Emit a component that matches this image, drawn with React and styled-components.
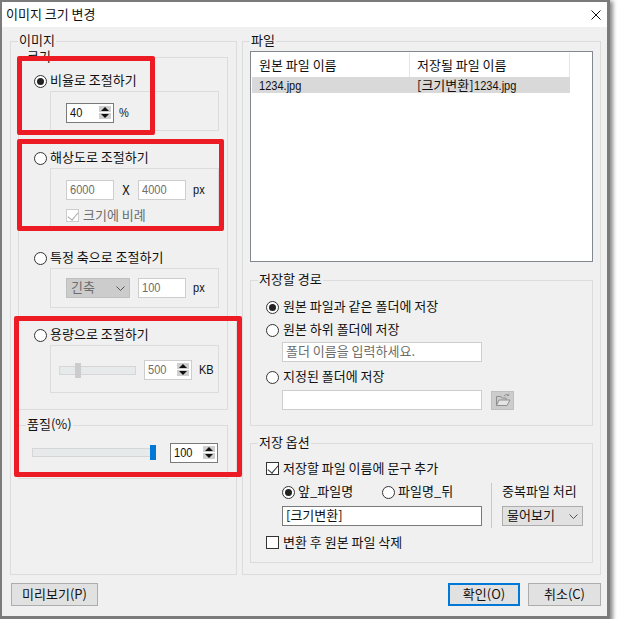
import styled, { createGlobalStyle } from "styled-components";

const GlobalStyle = createGlobalStyle`
  html, body {
    margin: 0;
    background: #fff;
  }
  * {
    box-sizing: border-box;
  }
`;

const App = () => {
  return (
    <>
      <GlobalStyle />
      <Dialog>
        <TitleBar>
          <Title>이미지 크기 변경</Title>
          <CloseIcon width="10" height="10" viewBox="0 0 10 10">
            <path d="M0.5 0.5 L9.5 9.5 M9.5 0.5 L0.5 9.5" stroke="#111" fill="none" />
          </CloseIcon>
        </TitleBar>

        <Body>
          <Columns>
            <LeftGroup>
              <Legend>이미지</Legend>
              <SizeGroup>
                <Legend>크기</Legend>
                <Option $top={14}>
                  <RadioLabel>
                    <Radio $checked />
                    비율로 조절하기
                  </RadioLabel>
                  <SubBox $height={40} $pad={11}>
                    <Spin $width={48} value="40" active />
                    <Unit $gap={5}>%</Unit>
                  </SubBox>
                </Option>
                <Option $top={18}>
                  <RadioLabel>
                    <Radio />
                    해상도로 조절하기
                  </RadioLabel>
                  <SubBox $height={62} $pad={11}>
                    <Fill $width={48} $disabled><Latin>6000</Latin></Fill>
                    <Times>X</Times>
                    <Fill $width={48} $disabled><Latin>4000</Latin></Fill>
                    <Unit $gap={7}>px</Unit>
                    <Ratio>
                      <CheckBox $checked $disabled />
                      크기에 비례
                    </Ratio>
                  </SubBox>
                </Option>
                <Option $top={19}>
                  <RadioLabel>
                    <Radio />
                    특정 축으로 조절하기
                  </RadioLabel>
                  <SubBox $height={40} $pad={9} $gap={3}>
                    <Combo $width={64} $disabled>
                      긴축
                      <Chevron />
                    </Combo>
                    <Fill $width={48} $left={8} $disabled><Latin>100</Latin></Fill>
                    <Unit $gap={7}>px</Unit>
                  </SubBox>
                </Option>
                <Option $top={18}>
                  <RadioLabel>
                    <Radio />
                    용량으로 조절하기
                  </RadioLabel>
                  <SubBox $height={48} $pad={14} $left={8}>
                    <Slider $width={77} $thumb={15} />
                    <Spin $width={48} $left={8} value="500" />
                    <Unit $gap={7}>KB</Unit>
                  </SubBox>
                </Option>
              </SizeGroup>
              <QualityGroup>
                <Legend>품질(%)</Legend>
                <Slider $width={124} $thumb={117} $top={5} $active />
                <Spin $width={48} $left={14} value="100" active />
              </QualityGroup>
            </LeftGroup>

            <RightGroup>
              <Legend>파일</Legend>
              <FileList>
                <ListHeader>
                  <HeaderCell>원본 파일 이름</HeaderCell>
                  <HeaderCell>저장될 파일 이름</HeaderCell>
                </ListHeader>
                <ListRow>
                  <RowCell><Latin>1234.jpg</Latin></RowCell>
                  <RowCell>[크기변환]<Latin>1234.jpg</Latin></RowCell>
                </ListRow>
              </FileList>

              <PathGroup>
                <Legend>저장할 경로</Legend>
                <PathRow $top={17}>
                  <Radio $checked />
                  원본 파일과 같은 폴더에 저장
                </PathRow>
                <PathRow $top={7}>
                  <Radio />
                  원본 하위 폴더에 저장
                </PathRow>
                <PathField $top={5}>
                  <Fill $width={200} $disabled>폴더 이름을 입력하세요.</Fill>
                </PathField>
                <PathRow $top={6}>
                  <Radio />
                  지정된 폴더에 저장
                </PathRow>
                <PathField $top={6}>
                  <Fill $width={200} $disabled />
                  <FolderButton>
                    <svg width="16" height="14" viewBox="0 0 16 14">
                      <path d="M1.5 12.5 V3.5 H6 L7 5 H11 V7" fill="none" stroke="#8f8f8f" />
                      <path d="M1.5 12.5 L4 7 H15 L12 12.5 Z" fill="#e4e4e4" stroke="#8f8f8f" />
                      <path d="M9 3 C10.5 1 12.5 1 13.5 2.5 M13.5 2.5 L14 0.8 M13.5 2.5 L11.8 2.6" fill="none" stroke="#8f8f8f" />
                    </svg>
                  </FolderButton>
                </PathField>
              </PathGroup>

              <SaveGroup>
                <Legend>저장 옵션</Legend>
                <PathRow $top={16}>
                  <CheckBox $checked />
                  저장할 파일 이름에 문구 추가
                </PathRow>
                <SaveGrid>
                  <SaveLeft>
                    <AffixRow>
                      <AffixItem $width={100}>
                        <Radio $checked />
                        앞_파일명
                      </AffixItem>
                      <AffixItem>
                        <Radio />
                        파일명_뒤
                      </AffixItem>
                    </AffixRow>
                    <Fill $width={200} $strong>[크기변환]</Fill>
                  </SaveLeft>
                  <SaveRight>
                    <DupLabel>중복파일 처리</DupLabel>
                    <Combo $width={81}>
                      물어보기
                      <Chevron />
                    </Combo>
                  </SaveRight>
                </SaveGrid>
                <PathRow $top={6}>
                  <CheckBox />
                  변환 후 원본 파일 삭제
                </PathRow>
              </SaveGroup>
            </RightGroup>
          </Columns>

          <Footer>
            <Button $width={87}>미리보기(P)</Button>
            <FooterRight>
              <Button $width={72} $primary>확인(O)</Button>
              <Button $width={73}>취소(C)</Button>
            </FooterRight>
          </Footer>
        </Body>

        <Marker $left={15} $top={54} $width={138} $height={79} />
        <Marker $left={15} $top={137} $width={207} $height={92} />
        <Marker $left={12} $top={314} $width={228} $height={161} />
      </Dialog>
    </>
  );
};

const Spin = ({ value, active, $width, $left }) => (
  <Fill $width={$width} $left={$left} $strong={active}>
    <Latin>{value}</Latin>
    <Stepper>
      <StepUp />
      <StepDown />
    </Stepper>
  </Fill>
);

const Chevron = () => (
  <ChevronIcon width="9" height="5" viewBox="0 0 9 5">
    <path d="M0.5 0.5 L4.5 4.5 L8.5 0.5" fill="none" stroke="#555" />
  </ChevronIcon>
);

const Dialog = styled.div`
  position: relative;
  width: 610px;
  height: 619px;
  border: solid #7b7b7b;
  border-width: 2px 3px 3px 2px;
  box-shadow: 2px 2px 4px 1px rgba(0, 0, 0, 0.45);
  background: #f0f0f0;
  font-family: "Noto Sans CJK KR", "Liberation Sans", sans-serif;
  font-size: 13px;
  line-height: 16px;
  color: #111;
`;

// 원본 글꼴의 숫자/영문 폭이 좁아서 가로로 줄임
const Latin = styled.span`
  display: inline-block;
  font-family: "Liberation Sans", sans-serif;
  transform: scaleX(0.85);
  transform-origin: left center;
`;

const TitleBar = styled.div`
  height: 25px;
  background: #fff;
  display: flex;
  align-items: center;
  justify-content: space-between;
  padding: 0 6px 2px 4px;
`;

const Title = styled.span`
  white-space: nowrap;
`;

const CloseIcon = styled.svg`
  display: block;
  margin-top: 2px;
`;

const Body = styled.div`
  padding: 14px 6px 0 8px;
`;

const Columns = styled.div`
  display: flex;
  gap: 5px;
`;

const Group = styled.div`
  position: relative;
  border: 1px solid #dcdcdc;
`;

const Legend = styled.span`
  position: absolute;
  left: 7px;
  top: -9px;
  padding: 0 1px;
  line-height: 14px;
  background: #f0f0f0;
  white-space: nowrap;
`;

const LeftGroup = styled(Group)`
  width: 227px;
  height: 534px;
  padding: 15px 8px 0 7px;
`;

const RightGroup = styled(Group)`
  width: 359px;
  height: 534px;
  padding: 9px 7px 0 7px;
`;

const SizeGroup = styled(Group)`
  height: 353px;
  padding: 0 8px 0 15px;
`;

const QualityGroup = styled(Group)`
  height: 54px;
  margin-top: 15px;
  padding: 17px 0 0 13px;
  display: flex;
  align-items: flex-start;
`;

const Option = styled.div`
  margin-top: ${(p) => p.$top}px;
`;

const RadioLabel = styled.div`
  display: flex;
  align-items: center;
  gap: 3px;
  height: 16px;
  white-space: nowrap;
`;

const Radio = styled.span`
  position: relative;
  flex: none;
  width: 13px;
  height: 13px;
  margin-top: 2px;
  border-radius: 50%;
  border: 1px solid #333;
  background: #fff;

  &::after {
    content: "";
    display: ${(p) => (p.$checked ? "block" : "none")};
    position: absolute;
    left: 2px;
    top: 2px;
    width: 7px;
    height: 7px;
    border-radius: 50%;
    background: #222;
  }
`;

const SubBox = styled.div`
  display: flex;
  flex-wrap: wrap;
  align-content: flex-start;
  align-items: center;
  height: ${(p) => p.$height}px;
  margin-top: ${(p) => p.$gap ?? 3}px;
  margin-left: 16px;
  padding: ${(p) => p.$pad}px 0 0 ${(p) => p.$left ?? 15}px;
  border: 1px solid #dcdcdc;
`;

const Fill = styled.div`
  position: relative;
  flex: none;
  width: ${(p) => p.$width}px;
  height: 20px;
  margin-left: ${(p) => p.$left ?? 0}px;
  padding: 0 3px;
  line-height: 16px;
  background: #fff;
  border: 1px solid ${(p) => (p.$strong ? "#7a7a7a" : "#cdcdcd")};
  color: ${(p) => (p.$strong ? "#111" : "#6d6d6d")};
  white-space: nowrap;
`;

const Stepper = styled.span`
  position: absolute;
  right: 2px;
  top: 2px;
  display: flex;
  flex-direction: column;
  gap: 1px;
`;

const StepUp = styled.span`
  display: block;
  width: 12px;
  height: 6px;
  background: #cfcfcf;

  &::after {
    content: "";
    display: block;
    width: 0;
    margin: 0 auto;
    border: 4px solid transparent;
    border-top-width: 0;
    border-bottom: 4px solid #111;
    transform: translateY(1px);
  }
`;

const StepDown = styled(StepUp)`
  &::after {
    border: 4px solid transparent;
    border-bottom-width: 0;
    border-top: 4px solid #111;
  }
`;

const Unit = styled(Latin)`
  margin-left: ${(p) => p.$gap}px;
  white-space: nowrap;
`;

const Times = styled.span`
  width: 24px;
  text-align: center;
`;

const Ratio = styled.div`
  flex-basis: 100%;
  display: flex;
  align-items: center;
  gap: 4px;
  margin-top: 7px;
  height: 16px;
  color: #6d6d6d;
`;

const CheckBox = styled.span`
  position: relative;
  flex: none;
  width: 13px;
  height: 13px;
  margin-top: 1px;
  background: #fff;
  border: 1px solid ${(p) => (p.$disabled ? "#cdcdcd" : "#333")};

  &::after {
    content: "";
    display: ${(p) => (p.$checked ? "block" : "none")};
    position: absolute;
    left: 3px;
    top: 0;
    width: 5px;
    height: 9px;
    border: solid ${(p) => (p.$disabled ? "#a8a8a8" : "#333")};
    border-width: 0 1.5px 1.5px 0;
    transform: rotate(40deg);
  }
`;

const Combo = styled.div`
  display: flex;
  align-items: center;
  justify-content: space-between;
  flex: none;
  width: ${(p) => p.$width}px;
  height: 20px;
  padding: 0 4px 2px;
  background: ${(p) => (p.$disabled ? "#cccccc" : "#e1e1e1")};
  border: 1px solid ${(p) => (p.$disabled ? "#bfbfbf" : "#adadad")};
  color: ${(p) => (p.$disabled ? "#6d6d6d" : "#111")};
  white-space: nowrap;
`;

const ChevronIcon = styled.svg`
  display: block;
  margin-top: 2px;
`;

const Slider = styled.div`
  position: relative;
  flex: none;
  width: ${(p) => p.$width}px;
  height: 9px;
  margin-top: ${(p) => p.$top ?? 0}px;
  background: #e7eaea;
  border: 1px solid #d6d6d6;

  &::after {
    content: "";
    position: absolute;
    left: ${(p) => p.$thumb}px;
    top: -4px;
    width: 6px;
    height: 15px;
    background: ${(p) => (p.$active ? "#0078d7" : "#cccccc")};
  }
`;

const FileList = styled.div`
  height: 211px;
  padding: 1px;
  background: #fff;
  border: 1px solid #828790;
`;

const ListHeader = styled.div`
  display: grid;
  grid-template-columns: 158px 160px;
  height: 24px;
  align-items: center;
`;

const HeaderCell = styled.div`
  height: 100%;
  padding: 4px 0 0 7px;
  border-right: 1px solid #e5e5e5;
  white-space: nowrap;
`;

const ListRow = styled.div`
  display: grid;
  grid-template-columns: 158px 160px;
  width: 318px;
  height: 16px;
  background: #d9d9d9;
`;

const RowCell = styled.div`
  padding-left: 7px;
  white-space: nowrap;
`;

const PathGroup = styled(Group)`
  height: 146px;
  margin-top: 18px;
  padding: 0 0 0 15px;
`;

const SaveGroup = styled(Group)`
  height: 120px;
  margin-top: 17px;
  padding: 0 0 0 15px;
`;

const PathRow = styled.div`
  display: flex;
  align-items: center;
  gap: 4px;
  height: 16px;
  margin-top: ${(p) => p.$top}px;
  white-space: nowrap;
`;

const PathField = styled.div`
  display: flex;
  align-items: center;
  gap: 9px;
  margin-top: ${(p) => p.$top}px;
  margin-left: 16px;
`;

const FolderButton = styled.div`
  display: flex;
  align-items: center;
  justify-content: center;
  width: 23px;
  height: 19px;
  background: #cccccc;
  border: 1px solid #bfbfbf;
`;

const SaveGrid = styled.div`
  display: flex;
  margin-top: 7px;
`;

const SaveLeft = styled.div`
  width: 209px;
  padding-left: 16px;
  flex: none;
  box-sizing: content-box;
`;

const AffixRow = styled.div`
  display: flex;
  height: 16px;
  margin-bottom: 7px;
`;

const AffixItem = styled.div`
  display: flex;
  align-items: center;
  gap: 3px;
  width: ${(p) => (p.$width ? `${p.$width}px` : "auto")};
  white-space: nowrap;
`;

const SaveRight = styled.div`
  height: 45px;
  padding-left: 10px;
  border-left: 1px solid #c8c8c8;
`;

const DupLabel = styled.div`
  height: 16px;
  margin-bottom: 7px;
  white-space: nowrap;
`;

const Footer = styled.div`
  display: flex;
  justify-content: space-between;
  margin-top: 8px;
  padding-left: 1px;
`;

const FooterRight = styled.div`
  display: flex;
  gap: 8px;
`;

const Button = styled.div`
  display: flex;
  align-items: center;
  justify-content: center;
  width: ${(p) => p.$width}px;
  height: 23px;
  padding-bottom: 2px;
  background: #e1e1e1;
  border: ${(p) => (p.$primary ? "2px solid #0078d7" : "1px solid #adadad")};
  white-space: nowrap;
`;

const Marker = styled.div`
  position: absolute;
  left: ${(p) => p.$left}px;
  top: ${(p) => p.$top}px;
  width: ${(p) => p.$width}px;
  height: ${(p) => p.$height}px;
  border: 5px solid #ed1c24;
  border-radius: 2px;
  pointer-events: none;
`;

export default App;
